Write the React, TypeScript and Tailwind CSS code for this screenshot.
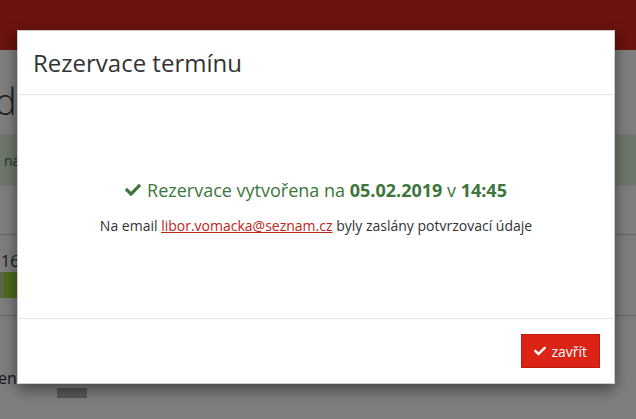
import { FaCheck } from "react-icons/fa";

// Pozadí stránky (za modálním oknem) – většina je zakrytá
const PageBehind = () => (
    <div className="w-full">
        <div className="h-[50px] bg-[#d7261a]" />
        <div className="h-[84px] pt-[34px]">
            <h1 className="text-[36px] leading-[36px] font-light text-[#333] -ml-[5px]">d</h1>
        </div>
        <div className="h-[52px] bg-[#dff0d8] text-[#3c763d] text-[14px] pl-[4px] flex items-center">
            na
        </div>
        <div className="h-[49px] border-b border-[#cccccc]" />
        <div className="h-[81px] border-b border-[#cccccc] pt-[16px]">
            <div className="text-[16px] leading-[20px] text-[#333] pl-[1px]">16</div>
            <div className="flex h-[26px] mt-[1px]">
                <div className="w-[2px] bg-[#b7c98a]" />
                <div className="w-[1px] bg-[#cccccc]" />
                <div className="w-[60px] bg-[#9cd63a]" />
            </div>
        </div>
        <div className="pt-[52px] text-[16px] leading-[20px] text-[#333] -ml-[2px]">en</div>
        <div className="ml-[57px] w-[30px] h-[10px] bg-[#b0b0b0]" />
    </div>
);

export default function App() {
    return (
        <div className="relative w-[636px] h-[419px] overflow-hidden bg-white" style={{ fontFamily: '"Open Sans", "Liberation Sans", sans-serif' }}>
            <PageBehind />

            {/* backdrop */}
            <div className="absolute inset-0 bg-black/50" />

            {/* modal */}
            <div className="absolute left-[17px] top-[30px] w-[598px] bg-white border border-black/20 shadow-[0_5px_15px_rgba(0,0,0,0.5)]">
                <div className="px-[15px] py-[15px] border-b border-[#e5e5e5]">
                    <h4 className="text-[24px] leading-[33px] text-[#333]">Rezervace termínu</h4>
                </div>

                <div className="h-[223px] flex flex-col items-center justify-center px-[15px]">
                    <div className="text-[18px] leading-[26px] text-[#3c763d] mb-[13px] flex items-center">
                        <FaCheck className="w-[16px] h-[16px] mr-[6px]" />
                        <span>
                            Rezervace vytvořena na <b>05.02.2019</b> v <b>14:45</b>
                        </span>
                    </div>
                    <p className="text-[14px] leading-[20px] text-[#333]">
                        Na email{" "}
                        <a href="#" className="text-[#bd2517] underline">libor.vomacka@seznam.cz</a>{" "}
                        byly zaslány potvrzovací údaje
                    </p>
                </div>

                <div className="border-t border-[#e5e5e5] py-[15px] pl-[15px] pr-[14px] flex justify-end">
                    <button className="h-[34px] px-[12px] bg-[#db2316] border border-[#b81d12] text-white text-[14px] flex items-center gap-[5px]">
                        <FaCheck className="w-[12px] h-[12px]" />
                        zavřít
                    </button>
                </div>
            </div>
        </div>
    );
}
